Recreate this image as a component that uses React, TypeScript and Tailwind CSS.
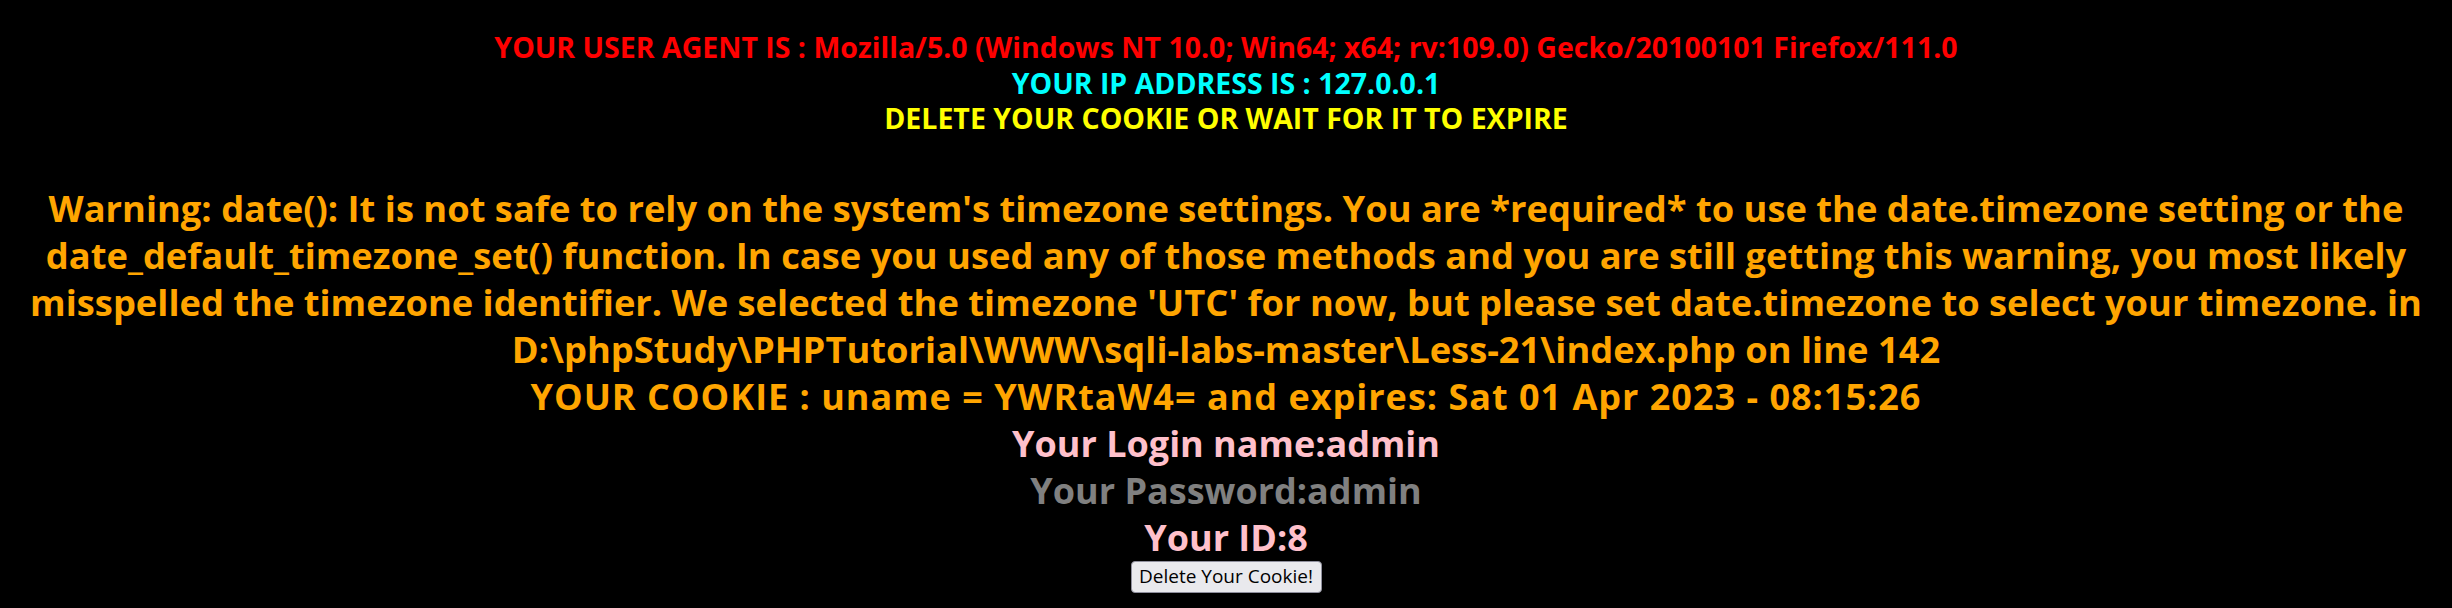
const warningLines = [
  "Warning: date(): It is not safe to rely on the system's timezone settings. You are *required* to use the date.timezone setting or the",
  "date_default_timezone_set() function. In case you used any of those methods and you are still getting this warning, you most likely",
  "misspelled the timezone identifier. We selected the timezone 'UTC' for now, but please set date.timezone to select your timezone. in",
  "D:\\phpStudy\\PHPTutorial\\WWW\\sqli-labs-master\\Less-21\\index.php on line 142",
];

export default function App() {
  return (
    <div className="min-h-[608px] w-full bg-black font-['Open_Sans',sans-serif] font-bold text-center whitespace-nowrap">
      <div className="pt-[30px] text-[28.5px] leading-[35.5px]">
        <div className="text-[#ff0000]">
          YOUR USER AGENT IS : Mozilla/5.0 (Windows NT 10.0; Win64; x64; rv:109.0) Gecko/20100101 Firefox/111.0
        </div>
        <div className="text-[#00ffff]">YOUR IP ADDRESS IS : 127.0.0.1</div>
        <div className="text-[#ffff00]">DELETE YOUR COOKIE OR WAIT FOR IT TO EXPIRE</div>
      </div>

      <div className="mt-[48px] text-[36px] leading-[47px]">
        <div className="text-[#ffa500] text-[36.3px]">
          {warningLines.map((line) => (
            <div key={line}>{line}</div>
          ))}
        </div>
        <div className="text-[#ffa500] tracking-[1px]">
          YOUR COOKIE : uname = YWRtaW4= and expires: Sat 01 Apr 2023 - 08:15:26
        </div>
        <div className="text-[#ffc0cb]">Your Login name:admin</div>
        <div className="text-[#808080]">Your Password:admin</div>
        <div className="text-[#ffc0cb]">Your ID:8</div>
      </div>

      <div className="flex justify-center">
        <button
          type="button"
          className="h-[32px] w-[191px] rounded-[4px] border border-[#8f8f9d] bg-[#e9e9ed] font-['Open_Sans',sans-serif] text-[19px] font-normal leading-none text-black"
        >
          Delete Your Cookie!
        </button>
      </div>
    </div>
  );
}
